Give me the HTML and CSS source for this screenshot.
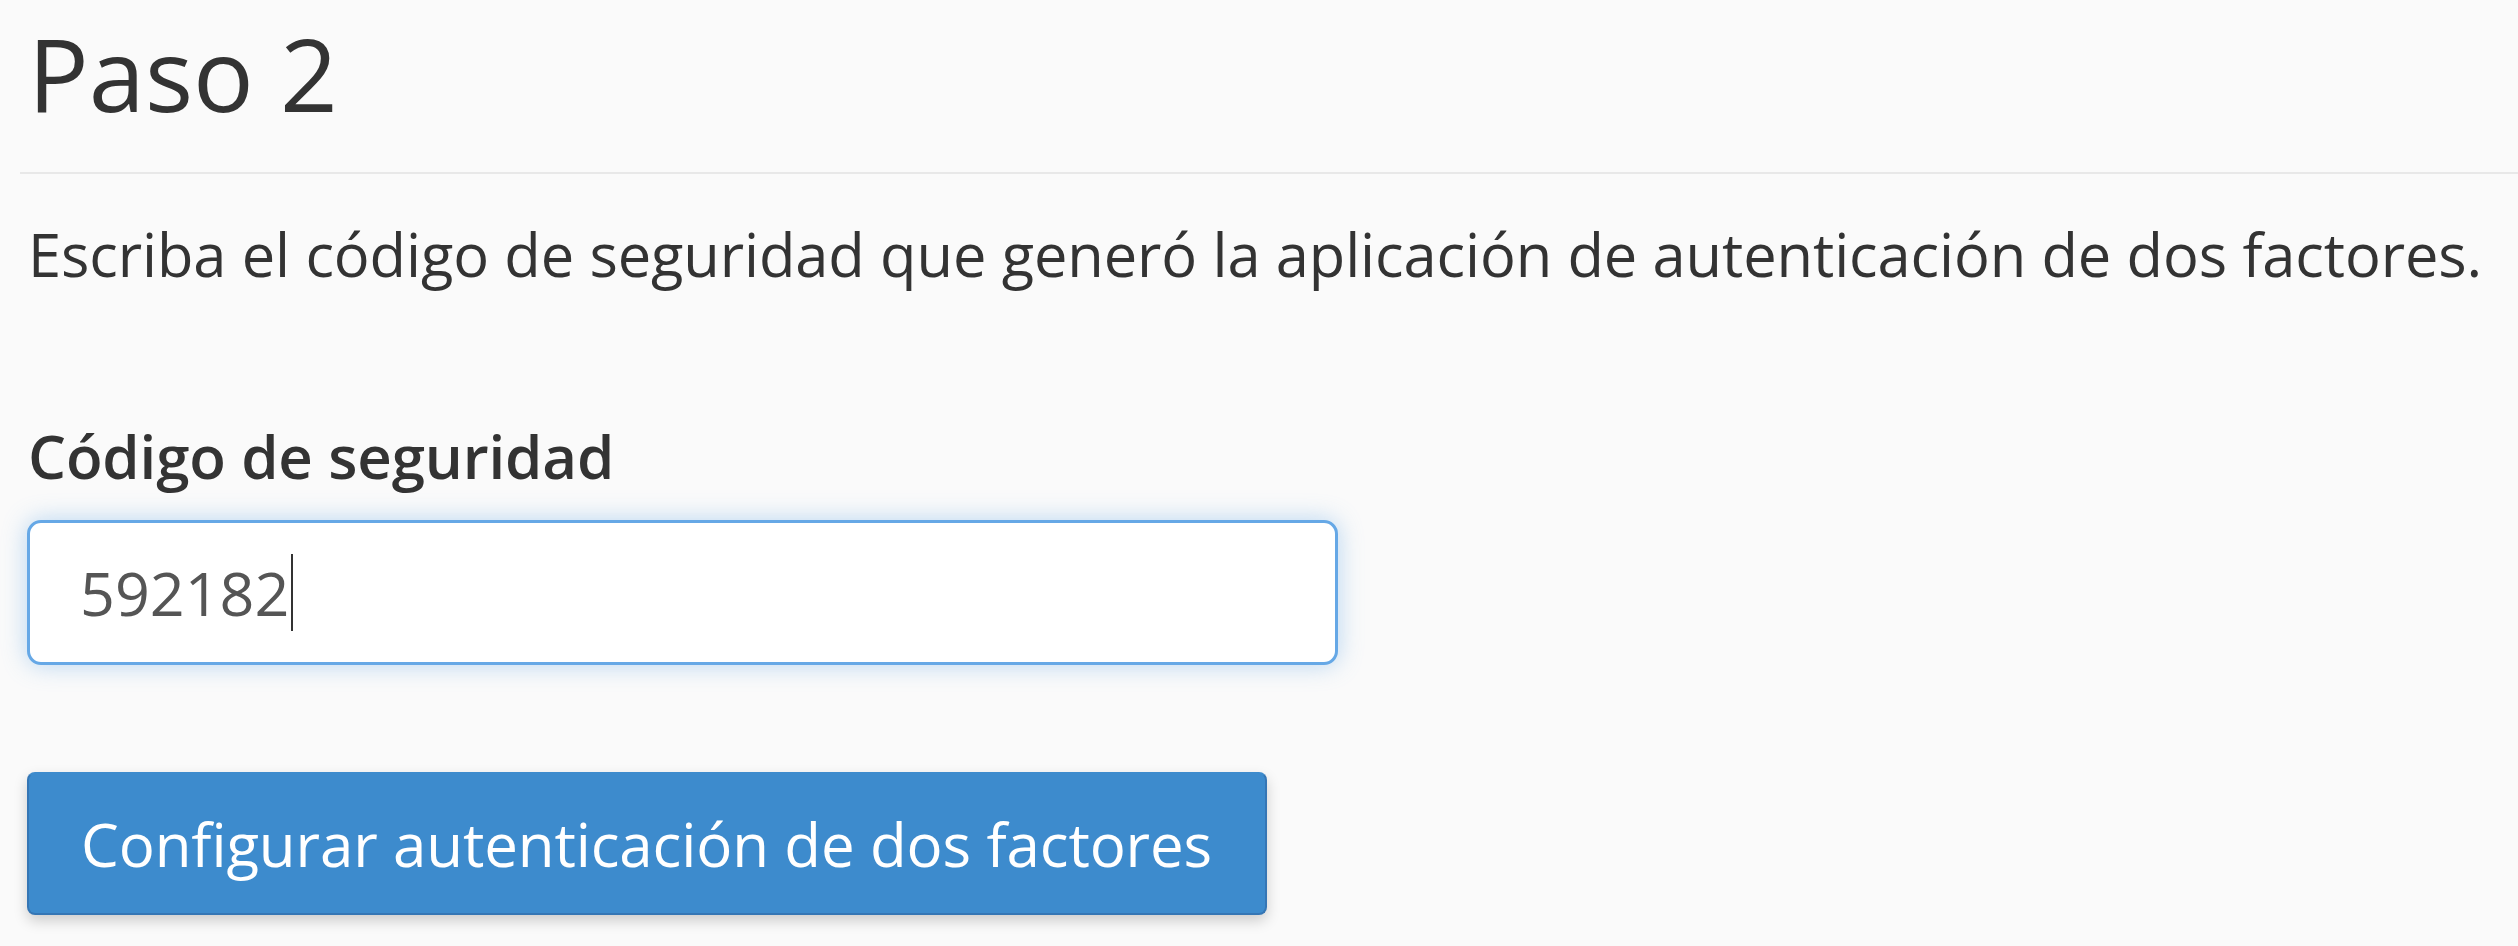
FILE: index.html
```html
<!DOCTYPE html>
<html lang="es">
<head>
<meta charset="utf-8">
<title>Paso 2</title>
<link rel="stylesheet" href="styles.css">
</head>
<body>
<div class="page">
  <h1 class="title">Paso 2</h1>
  <hr class="rule">
  <p class="intro">Escriba el código de seguridad que generó la aplicación de autenticación de dos factores.</p>
  <form class="form">
    <label class="label" for="code">Código de seguridad</label>
    <div class="input"><span class="value">592182</span><span class="caret"></span></div>
    <button type="button" class="btn">Configurar autenticación de dos factores</button>
  </form>
</div>
</body>
</html>
```

FILE: styles.css
```css
html, body {
  margin: 0;
  padding: 0;
  background: #fafafa;
}
body {
  font-family: "Open Sans", "Noto Sans", sans-serif;
  color: #333;
  width: 2518px;
  height: 946px;
  overflow: hidden;
}
.page {
  padding: 18px 0 0 28px;
}
.title {
  margin: 0;
  font-size: 101px;
  line-height: 110px;
  font-weight: 400;
  color: #333;
}
.rule {
  margin: 44px 0 0 -8px;
  border: 0;
  height: 2px;
  background: #e8e8e8;
}
.intro {
  margin: 36px 0 0 0;
  font-size: 59.6px;
  line-height: 87px;
  letter-spacing: -0.1px;
  white-space: nowrap;
}
.form {
  display: flex;
  flex-direction: column;
  align-items: flex-start;
  margin-top: 116px;
}
.label {
  font-size: 60px;
  line-height: 87px;
  font-weight: 600;
  letter-spacing: -0.15px;
  color: #333;
}
.input {
  box-sizing: border-box;
  margin-top: 20px;
  margin-left: -1px;
  width: 1311px;
  height: 145px;
  background: #fff;
  border: 3px solid #66a8e6;
  border-radius: 14px;
  box-shadow: 0 0 24px rgba(102, 168, 230, 0.45);
  display: flex;
  align-items: center;
  padding-left: 50px;
  font-size: 61px;
  color: #555;
}
.value {
  line-height: 87px;
}
.caret {
  width: 2px;
  height: 77px;
  background: #333;
  margin-left: 2px;
}
.btn {
  box-sizing: border-box;
  margin-top: 107px;
  margin-left: -1px;
  width: 1240px;
  height: 143px;
  padding: 0 0 0 52px;
  text-align: left;
  font-family: inherit;
  font-size: 60px;
  letter-spacing: -0.12px;
  color: #fff;
  background: #3d8bcd;
  border: 2px solid #3576b5;
  border-top-color: #3d8bcd;
  border-radius: 8px;
  box-shadow: 0 6px 14px rgba(0, 0, 0, 0.18);
}
```
